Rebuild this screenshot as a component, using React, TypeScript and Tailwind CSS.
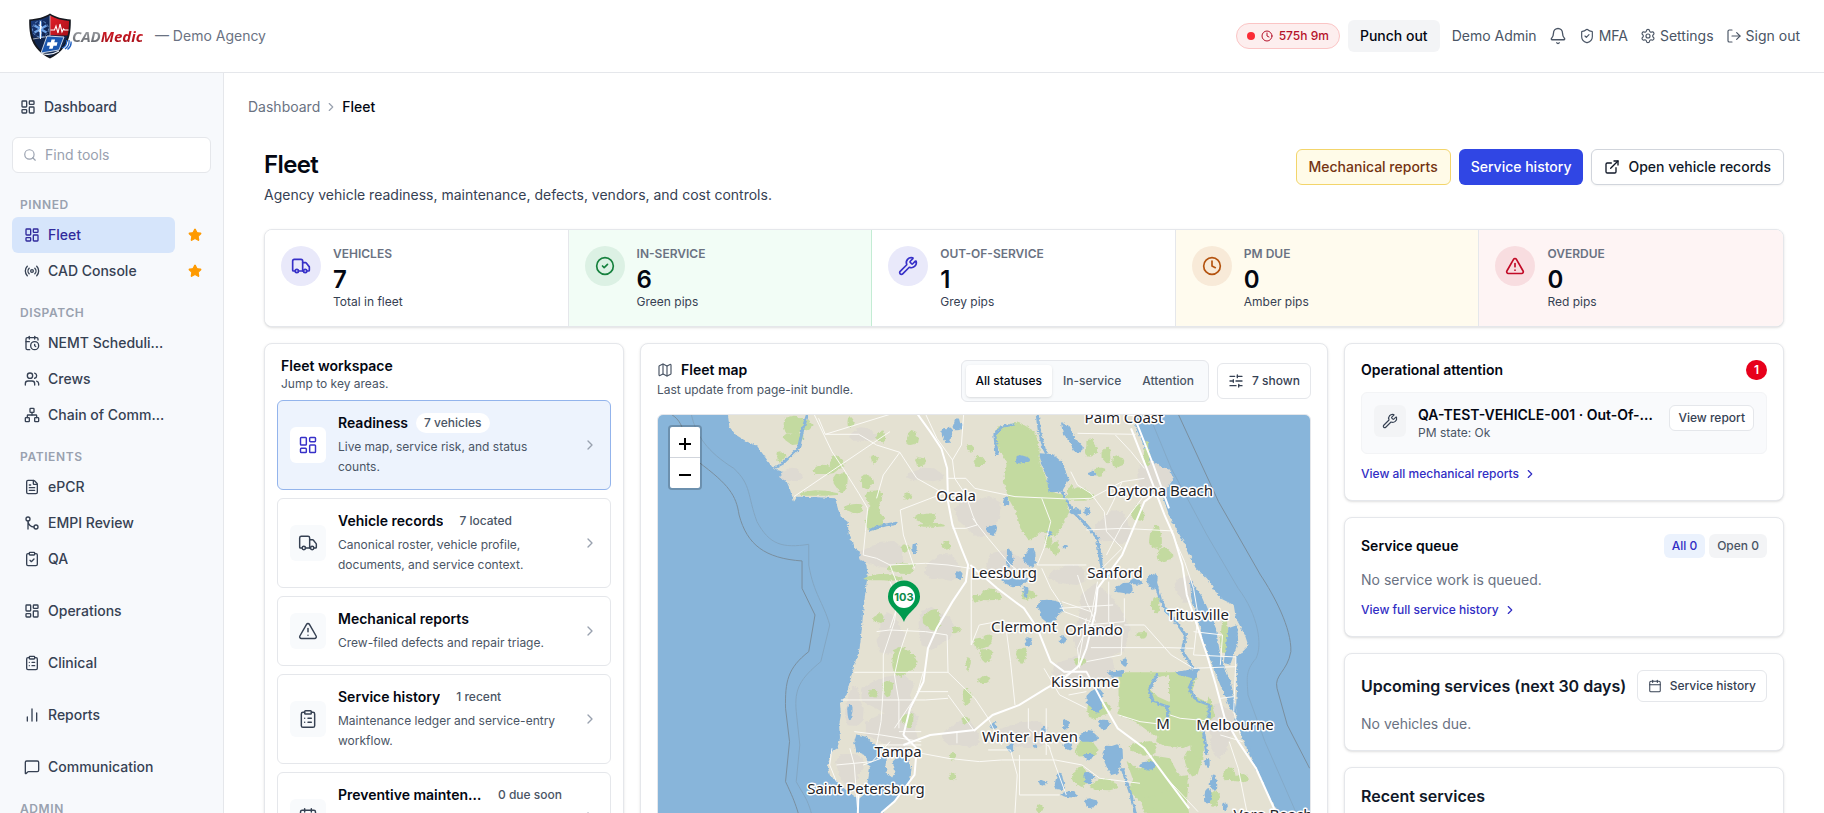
import type { ReactNode } from 'react';
import {
  Bell,
  Calendar,
  CalendarClock,
  ChartNoAxesColumn,
  ChevronRight,
  CircleCheck,
  ClipboardCheck,
  ClipboardList,
  Clock,
  ExternalLink,
  FileText,
  GitMerge,
  LayoutDashboard,
  LogOut,
  Map as MapIcon,
  MessageSquare,
  Network,
  Radio,
  Search,
  Settings,
  ShieldCheck,
  SlidersHorizontal,
  Star,
  TriangleAlert,
  Truck,
  Users,
  Wrench,
  type LucideIcon,
} from 'lucide-react';

interface NavItem {
  name: string;
  icon: LucideIcon;
  active?: boolean;
  pinned?: boolean;
}

interface NavSection {
  label?: string;
  items: NavItem[];
}

const navSections: NavSection[] = [
  {
    label: 'Pinned',
    items: [
      { name: 'Fleet', icon: LayoutDashboard, active: true, pinned: true },
      { name: 'CAD Console', icon: Radio, pinned: true },
    ],
  },
  {
    label: 'Dispatch',
    items: [
      { name: 'NEMT Scheduling', icon: CalendarClock },
      { name: 'Crews', icon: Users },
      { name: 'Chain of Command', icon: Network },
    ],
  },
  {
    label: 'Patients',
    items: [
      { name: 'ePCR', icon: FileText },
      { name: 'EMPI Review', icon: GitMerge },
      { name: 'QA', icon: ClipboardCheck },
    ],
  },
  { items: [{ name: 'Operations', icon: LayoutDashboard }] },
  { items: [{ name: 'Clinical', icon: ClipboardList }] },
  { items: [{ name: 'Reports', icon: ChartNoAxesColumn }] },
  { items: [{ name: 'Communication', icon: MessageSquare }] },
  { label: 'Admin', items: [] },
];

const stats = [
  { label: 'Vehicles', value: 7, note: 'Total in fleet', icon: Truck, cell: 'bg-white border-gray-200', badge: 'bg-[#e9e9fa] text-[#3730c8]' },
  { label: 'In-service', value: 6, note: 'Green pips', icon: CircleCheck, cell: 'bg-[#f2fdf6] border-[#c3ecd4]', badge: 'bg-[#dcf1e4] text-[#15803d]' },
  { label: 'Out-of-service', value: 1, note: 'Grey pips', icon: Wrench, cell: 'bg-white border-gray-200', badge: 'bg-[#e9e9fa] text-[#3730c8]' },
  { label: 'PM due', value: 0, note: 'Amber pips', icon: Clock, cell: 'bg-[#fffbee] border-gray-200', badge: 'bg-[#f8ead8] text-[#b4530f]' },
  { label: 'Overdue', value: 0, note: 'Red pips', icon: TriangleAlert, cell: 'bg-[#fef4f4]', badge: 'bg-[#f8dde0] text-[#c10a26]' },
];

const workspace = [
  { title: 'Readiness', count: '7 vehicles', text: 'Live map, service risk, and status counts.', icon: LayoutDashboard, active: true },
  { title: 'Vehicle records', count: '7 located', text: 'Canonical roster, vehicle profile, documents, and service context.', icon: Truck },
  { title: 'Mechanical reports', text: 'Crew-filed defects and repair triage.', icon: TriangleAlert },
  { title: 'Service history', count: '1 recent', text: 'Maintenance ledger and service-entry workflow.', icon: ClipboardList },
  { title: 'Preventive maintenance', count: '0 due soon', text: 'Interval tracking and overdue services for every vehicle.', icon: Calendar },
];

function Logo() {
  return (
    <a href="#" className="flex items-center" aria-label="CADMedic">
      <svg viewBox="0 0 44 46" className="h-[46px] w-11">
        <defs>
          <linearGradient id="shield-blue" x1="0" y1="0" x2="1" y2="1">
            <stop offset="0" stopColor="#1c3f86" />
            <stop offset="1" stopColor="#0c1c40" />
          </linearGradient>
          <linearGradient id="shield-red" x1="0" y1="0" x2="1" y2="1">
            <stop offset="0" stopColor="#e5202a" />
            <stop offset="1" stopColor="#a80f18" />
          </linearGradient>
        </defs>
        <path d="M22 .5C17 4 9 6 1.200 6.500 1 22 3 36 22 45.500 41 36 43 22 42.800 6.500 35 6 27 4 22 .5z" fill="#15181f" />
        <path d="M22 2.500C17 5.500 10 7.500 3 8c0 7 .5 12 2.500 17L22 23z" fill="url(#shield-blue)" />
        <path d="M22 2.500C27 5.500 34 7.500 41 8c0 6-.3 10-1.500 14.500L22 23z" fill="url(#shield-red)" />
        <path d="M5.500 25C8 33 13 39 22 43.500 31 39 37 32 39.500 23L22 22z" fill="#10264f" />
        <path d="M22 2.500V23L5 26" fill="none" stroke="#c9ced8" strokeWidth=".8" />
        <path d="M12.500 9v16M6.500 12.500l12 7M18.500 12.500l-12 7" stroke="#6fa4e8" strokeWidth="2.400" />
        <path d="M12.500 8v18M10.500 12c4 1 4 3 2 4s-2 3 1 4" fill="none" stroke="#fff" strokeWidth="1" />
        <circle cx="12.500" cy="16" r="8" fill="none" stroke="#86b3ea" strokeWidth=".7" strokeDasharray="3 1.500" />
        <path d="M22.500 17h4l1.500-4 2 7 2-9 2 8 1.500-3 1 1h4" fill="none" stroke="#fff" strokeWidth="1.100" />
        <path d="M19 23l17 1-5 13-18 3z" fill="#1b57b0" stroke="#dfe6f2" strokeWidth=".9" />
        <path d="M14 40.500c5 1.500 12 .5 17-2.500" fill="none" stroke="#eef2f8" strokeWidth="1.200" />
        <path d="M23.500 26.500h3.600l-.8 2.800h3.200l-.8 3.400h-3.200l-.9 3h-3.600l.9-3h-3.200l.9-3.400h3.200z" fill="#fff" />
        <path d="M34 35c3-1 5-4 4.500-8M37 36c3-2 4.500-5 4-9M39.500 36.500c2.500-2 4-5 3.500-8" fill="none" stroke="#1f5fc0" strokeWidth="1.300" />
      </svg>
      <span className="font-['Open_Sans',sans-serif] text-[15px] leading-5 font-bold italic">
        <span className="bg-gradient-to-b from-[#b4b6ba] to-[#55585e] bg-clip-text text-transparent">CAD</span>
        <span className="bg-gradient-to-b from-[#e3202c] to-[#9c0d16] bg-clip-text text-transparent">Medic</span>
      </span>
    </a>
  );
}

function Header() {
  return (
    <header className="flex h-[73px] shrink-0 items-center justify-between border-b border-gray-200 bg-white pr-6 pl-7">
      <div className="flex items-center gap-3">
        <Logo />
        <span className="text-sm text-gray-500">— Demo Agency</span>
      </div>
      <div className="flex items-center gap-3 text-sm text-gray-600">
        <div className="flex items-center gap-2">
          <span className="flex h-[26px] items-center gap-1.5 rounded-full border border-[#fbc5c5] bg-[#fdeeee] px-2.5 text-xs font-medium text-[#b5122a]">
            <span className="size-2 rounded-full bg-[#fb2c36]" />
            <Clock size={12} />
            575h 9m
          </span>
          <button className="h-8 rounded-md bg-gray-100 px-3 font-medium text-gray-950">Punch out</button>
        </div>
        <span>Demo Admin</span>
        <button aria-label="Notifications">
          <Bell size={18} strokeWidth={1.75} />
        </button>
        <a href="#" className="flex items-center gap-1">
          <ShieldCheck size={16} strokeWidth={1.75} />
          MFA
        </a>
        <a href="#" className="flex items-center gap-1">
          <Settings size={16} strokeWidth={1.75} />
          Settings
        </a>
        <button className="flex items-center gap-1">
          <LogOut size={16} strokeWidth={1.75} />
          Sign out
        </button>
      </div>
    </header>
  );
}

function Sidebar() {
  return (
    <aside className="w-56 shrink-0 overflow-hidden border-r border-gray-200 bg-[#f7f9fc] px-3 pt-4">
      <a href="#" className="flex h-9 items-center gap-2 px-2 text-sm font-medium text-gray-700">
        <LayoutDashboard size={16} />
        Dashboard
      </a>
      <label className="mt-3 flex h-9 items-center gap-2 rounded-md border border-gray-200 bg-white px-2.5 text-gray-400">
        <Search size={14} />
        <input
          type="text"
          aria-label="Find tools"
          placeholder="Find tools"
          className="min-w-0 flex-1 text-sm text-gray-700 outline-none placeholder:text-gray-400"
        />
      </label>
      <nav className="mt-6 space-y-4">
        {navSections.map((section, i) => (
          <div key={i}>
            {section.label && (
              <h2 className="mb-1 px-2 text-xs font-semibold tracking-wider text-gray-400 uppercase">{section.label}</h2>
            )}
            {section.items.map((item) => (
              <div key={item.name} className="flex items-center gap-1">
                <a
                  href="#"
                  className={`flex h-9 min-w-0 flex-1 items-center gap-2 rounded-md pr-2 pl-3 text-sm font-medium ${
                    item.active ? 'bg-[#d6e5fb] text-[#312a9c]' : 'text-gray-700'
                  }`}
                >
                  <item.icon size={16} className="shrink-0" />
                  <span className="truncate">{item.name}</span>
                </a>
                <button className="flex size-8 items-center justify-center" aria-label={`Pin ${item.name}`}>
                  {item.pinned && <Star size={14} className="fill-[#fe9a00] text-[#fe9a00]" />}
                </button>
              </div>
            ))}
          </div>
        ))}
      </nav>
    </aside>
  );
}

function Card({ className = '', children }: { className?: string; children: ReactNode }) {
  return <section className={`rounded-lg border border-gray-200 bg-white shadow-sm ${className}`}>{children}</section>;
}

function StatStrip() {
  return (
    <Card className="grid grid-cols-5 overflow-hidden">
      {stats.map((stat) => (
        <div key={stat.label} className={`flex gap-3 border-r p-4 last:border-r-0 ${stat.cell}`}>
          <span className={`flex size-10 shrink-0 items-center justify-center rounded-full ${stat.badge}`}>
            <stat.icon size={20} />
          </span>
          <div>
            <p className="text-xs font-semibold text-gray-500 uppercase">{stat.label}</p>
            <p className="mt-1 text-2xl leading-7 font-semibold text-gray-950">{stat.value}</p>
            <p className="text-xs text-gray-700">{stat.note}</p>
          </div>
        </div>
      ))}
    </Card>
  );
}

function Workspace() {
  return (
    <Card className="space-y-2 p-3">
      <div className="px-1">
        <h2 className="text-sm font-semibold text-gray-950">Fleet workspace</h2>
        <p className="text-xs text-gray-600">Jump to key areas.</p>
      </div>
      {workspace.map((item) => (
        <a
          key={item.title}
          href="#"
          className={`flex items-center gap-3 rounded-md border p-3 ${
            item.active ? 'border-[#93b4ec] bg-[#edf3fd]' : 'border-gray-200 bg-white'
          }`}
        >
          <span
            className={`flex size-9 shrink-0 items-center justify-center rounded-md ${
              item.active ? 'bg-white text-[#3730c8]' : 'bg-[#f8fafc] text-gray-700'
            }`}
          >
            <item.icon size={20} strokeWidth={1.75} />
          </span>
          <div className="min-w-0 flex-1">
            <div className="flex h-5 items-center gap-2">
              <h3 className="truncate text-sm font-semibold text-gray-950">{item.title}</h3>
              {item.count && (
                <span className="shrink-0 rounded-full bg-white px-2 text-xs leading-5 font-medium text-gray-600">{item.count}</span>
              )}
            </div>
            <p className="mt-1 text-xs leading-5 text-gray-600">{item.text}</p>
          </div>
          <ChevronRight size={16} className="shrink-0 text-gray-400" />
        </a>
      ))}
    </Card>
  );
}

// Land cover blobs: centre x, centre y, radius x, radius y
const parks: number[][] = [
  [350, 270, 32, 26], [345, 310, 22, 18], [472, 262, 8, 16], [540, 305, 10, 18], [610, 310, 14, 22], [525, 372, 8, 12],
  [628, 380, 12, 14], [440, 385, 16, 24], [412, 405, 24, 14], [315, 365, 10, 16], [508, 440, 14, 22], [450, 440, 16, 30],
  [400, 475, 42, 8], [525, 490, 18, 28], [480, 520, 22, 14], [525, 550, 20, 40], [600, 485, 9, 12], [640, 550, 24, 16],
  [655, 570, 28, 6], [760, 380, 12, 16], [740, 340, 8, 12], [686, 630, 9, 14], [588, 700, 30, 16], [595, 640, 10, 12],
  [1010, 340, 14, 26], [1045, 360, 10, 24], [1070, 380, 14, 18], [1030, 410, 12, 14], [985, 480, 30, 20], [1115, 535, 14, 24],
  [1155, 610, 14, 36], [1175, 660, 18, 20], [1135, 360, 6, 38], [930, 640, 10, 20], [965, 465, 8, 16], [915, 620, 8, 20],
  [545, 728, 42, 10], [655, 855, 20, 32], [535, 850, 12, 14], [590, 980, 28, 42], [555, 1060, 12, 24], [522, 1075, 10, 14],
  [600, 1155, 14, 22], [785, 780, 24, 18], [755, 790, 12, 12], [765, 925, 20, 16], [780, 910, 10, 12], [775, 960, 14, 20],
  [735, 985, 6, 20], [770, 1035, 14, 12], [732, 1085, 10, 26], [728, 1155, 8, 12], [855, 960, 12, 24], [700, 1265, 8, 12],
  [700, 1325, 8, 12], [708, 885, 10, 10], [870, 780, 18, 14], [1155, 810, 10, 24], [1125, 900, 12, 10], [985, 980, 14, 12],
  [1025, 1120, 26, 30], [1000, 1240, 24, 30], [985, 1325, 16, 30], [1040, 1350, 30, 18], [895, 1420, 8, 12], [1130, 1240, 30, 22],
  [1160, 1340, 60, 70], [1240, 1280, 20, 40], [1200, 1210, 40, 30], [1320, 1320, 14, 20], [1345, 1330, 20, 12], [1250, 1230, 16, 40],
  [1310, 900, 10, 60], [1180, 1400, 50, 30], [1285, 1390, 14, 24],
];

const urban: number[][] = [
  [545, 660, 50, 40], [760, 540, 50, 60], [560, 900, 30, 60], [1030, 880, 60, 120], [1000, 1000, 70, 50], [570, 1180, 60, 60],
  [470, 1300, 30, 50], [1060, 580, 40, 50], [1150, 430, 40, 50], [820, 690, 50, 40], [860, 1200, 60, 40], [1300, 1180, 30, 80],
  [720, 1200, 40, 40], [560, 1080, 60, 60], [480, 1120, 20, 60], [340, 420, 24, 20], [500, 300, 30, 20], [640, 420, 40, 20],
  [680, 700, 40, 40], [960, 720, 40, 30], [1220, 760, 20, 40], [660, 880, 40, 60],
];

const lakes: number[][] = [
  [688, 298, 12, 24], [711, 270, 10, 18], [788, 585, 12, 16], [820, 500, 7, 14], [856, 373, 16, 12], [1013, 416, 8, 8],
  [1002, 530, 7, 12], [975, 530, 12, 10], [828, 670, 8, 28], [874, 668, 14, 28], [918, 596, 6, 8], [952, 634, 6, 6],
  [840, 738, 30, 14], [864, 770, 6, 18], [918, 825, 28, 34], [870, 920, 8, 14], [948, 915, 8, 12], [1085, 760, 20, 16],
  [1110, 740, 14, 10], [1148, 738, 12, 24], [1085, 982, 7, 12], [1020, 1095, 18, 36], [1040, 1168, 12, 16], [1005, 1205, 20, 18],
  [954, 1168, 8, 16], [960, 1232, 10, 14], [904, 1184, 6, 10], [885, 1232, 5, 7], [792, 1172, 8, 10], [830, 1238, 9, 13],
  [1060, 1270, 22, 46], [1138, 1292, 18, 14], [940, 1342, 10, 26], [962, 1378, 18, 10], [1005, 1328, 12, 18], [1010, 1404, 14, 14],
  [902, 1344, 9, 8], [1005, 1265, 10, 10], [615, 640, 5, 16], [470, 1130, 6, 24], [1285, 1345, 8, 24], [1272, 1385, 9, 22],
  [1271, 1284, 6, 14], [1310, 1415, 6, 12], [715, 720, 8, 14],
];

const cities = [
  { name: 'Palm Coast', x: 466, y: 8 },
  { name: 'Ocala', x: 298, y: 86 },
  { name: 'Daytona Beach', x: 502, y: 81 },
  { name: 'Leesburg', x: 346, y: 163 },
  { name: 'Sanford', x: 457, y: 163 },
  { name: 'Clermont', x: 366, y: 217 },
  { name: 'Orlando', x: 436, y: 220 },
  { name: 'Titusville', x: 540, y: 205 },
  { name: 'Kissimme', x: 427, y: 272 },
  { name: 'M', x: 505, y: 314 },
  { name: 'Melbourne', x: 577, y: 315 },
  { name: 'Winter Haven', x: 372, y: 327 },
  { name: 'Tampa', x: 240, y: 342 },
  { name: 'Saint Petersburg', x: 208, y: 379 },
  { name: 'Vero Beach', x: 615, y: 405 },
];

function blobPath([cx, cy, rx, ry]: number[]) {
  const points = Array.from({ length: 11 }, (_, i) => {
    const angle = (i / 11) * Math.PI * 2;
    const r = 0.75 + 0.4 * Math.abs(Math.sin(cx * 3.1 + cy * 1.7 + i * 2.3));
    return `${Math.round(cx + Math.cos(angle) * rx * r)},${Math.round(cy + Math.sin(angle) * ry * r)}`;
  });
  return `M${points.join('L')}z`;
}

function FleetMap() {
  return (
    <svg viewBox="0 0 652 520" preserveAspectRatio="xMidYMin slice" className="h-full w-full bg-[#88b5da]" role="img" aria-label="Fleet map of central Florida">
      <defs>
        <filter id="rough" x="-5%" y="-5%" width="110%" height="110%">
          <feTurbulence type="fractalNoise" baseFrequency=".12" numOctaves="3" seed="4" />
          <feDisplacementMap in="SourceGraphic" scale="9" xChannelSelector="R" yChannelSelector="G" />
        </filter>
      </defs>
      <g transform="matrix(.4464 0 0 .3333 -18 -80)">
        {/* Maritime boundaries */}
        <g fill="none" stroke="#7a8f9f" strokeWidth="1" className="[&>path]:[vector-effect:non-scaling-stroke]">
          <path d="M70 238C110 270 90 330 130 380 200 450 215 480 222 540 240 630 280 670 363 678V760L392 840 378 950C330 1000 325 1040 326 1120L335 1220 326 1340C340 1380 355 1420 366 1500" />
          <path d="M115 238C125 300 150 350 210 400 250 450 240 480 262 560 290 630 320 640 378 628V690C390 780 410 800 425 870L405 980C360 1030 345 1060 350 1130L358 1230 350 1340C365 1380 385 1400 392 1500" opacity=".4" />
          <path d="M1206 238L1296 500 1390 720C1420 780 1460 880 1458 950 1450 1010 1420 1020 1427 1060L1450 1170 1500 1300" />
          <path d="M1140 238L1190 400 1270 600 1340 760C1385 840 1395 930 1380 970 1355 1010 1360 1030 1362 1080L1400 1220 1470 1434" opacity=".3" />
        </g>

        <g filter="url(#rough)">
          <path
            fill="#e4e1d2"
            d="M194 200L200 275 215 300 240 320 262 332 278 362 290 385 300 403 318 410 325 430 335 460 345 500 352 485 400 487 437 490 443 520 450 545 465 560 468 600 480 640 505 660 508 700 510 720 505 770 500 830 497 880 492 940 480 990 470 1040 462 1080 448 1105 450 1140 446 1170 448 1210 442 1240 430 1250 420 1290 425 1320 445 1345 465 1370 490 1392 505 1375 510 1340 515 1300 505 1262 485 1250 480 1220 485 1198 505 1205 520 1222 540 1240 556 1250 550 1290 553 1315 565 1328 572 1310 566 1280 585 1255 600 1275 608 1300 605 1340 590 1370 570 1400 550 1420 540 1450 600 1600 640 1850H1560L1500 1600 1430 1434 1395 1340 1370 1260 1345 1190 1335 1120 1338 1050 1335 965 1350 950 1363 932 1355 900 1335 850 1330 810 1300 790 1270 730 1245 700 1225 640 1205 590 1185 540 1175 500 1160 440 1140 380 1125 320 1110 275 1100 200z"
          />
          <g fill="#dedad2">
            {urban.map((area, i) => (
              <path key={i} d={blobPath(area)} />
            ))}
          </g>
          <g fill="#c3daa0">
            <path d="M800 275L850 262 885 290 895 340 895 380 910 430 920 470 950 480 962 530 945 575 930 605 900 590 872 618 852 580 842 530 825 490 815 440 822 380 805 350 795 310z" />
            <path d="M1072 1012H1187L1240 1010 1280 1100 1290 1140 1260 1180 1240 1230 1150 1200 1110 1160 1072 1140z" />
            <path d="M1090 1280L1130 1310 1180 1330 1230 1320 1225 1400 1240 1500 1180 1500 1130 1430z" />
            {parks.map((park, i) => (
              <path key={i} d={blobPath(park)} />
            ))}
          </g>
          <path fill="#e4e1d2" d="M1150 1030L1185 1020V1100L1160 1085 1142 1060zM1245 1030L1280 1050 1270 1100 1235 1080z" />
          <g fill="#88b5da">
            {lakes.map((lake, i) => (
              <path key={i} d={blobPath(lake)} />
            ))}
            <path d="M895 355L925 358 948 385 960 435 945 470 915 472 912 430 898 385z" />
            <path d="M943 262L962 275 975 310 992 335 990 352 975 352 962 320 948 300z" />
            <path d="M1232 735L1262 790 1290 880 1300 960 1325 1050 1338 1140 1322 1120 1300 1050 1285 1000 1262 920 1250 850 1235 790z" />
            <path d="M1318 880L1338 870 1340 920 1322 990 1308 980z" />
            <path d="M1200 1010L1255 1000 1240 1030 1205 1020zM1045 1010L1085 1005 1080 1025 1055 1025z" />
          </g>
          <g fill="none" stroke="#88b5da" strokeWidth="7">
            <path d="M375 240L365 280 355 340 320 385 300 400" />
            <path d="M890 240L895 290 905 340 920 380M800 360L795 300 810 275 840 268" />
            <path d="M945 470L970 530 1000 570 1025 610 1030 660 1035 700 1060 730M1150 720L1165 790 1180 830 1200 860 1222 900 1215 950 1240 1000" />
            <path d="M1160 1015L1140 1065 1150 1100 1182 1115V1150M1245 1015L1230 1060 1245 1095 1275 1110V1150" />
            <path d="M1080 1300L1100 1380 1120 1500M1260 1170L1270 1260" />
            <path d="M1335 1150L1370 1260 1420 1400" strokeWidth="9" />
            <path d="M515 585L550 570 575 565" strokeWidth="9" />
          </g>
        </g>

        {/* Roads */}
        <g fill="none" stroke="#fbfaf6" strokeWidth="1" className="[&>path]:[vector-effect:non-scaling-stroke]">
          <path d="M390 238L430 350 455 400 490 475 510 520 505 590 500 660 530 670 560 690 580 760 570 860 545 960 545 1060 540 1160 530 1230" />
          <path d="M560 238L415 298H490L530 330 582 352 545 420 530 490M582 352L620 430 680 475 583 525 590 600 615 700M400 250L415 298M345 485L455 385 560 290" />
          <path d="M640 238L665 310 700 375 720 330 725 238M700 375L705 430 730 480" />
          <path d="M688 430H730L750 460 840 485 960 492 1010 490 1080 440 1130 430" />
          <path d="M730 480L745 540 755 570 730 580H700M745 550L780 610 830 690 860 720" />
          <path d="M900 490L920 560 905 640 890 690H1000M900 700L920 760 940 800 950 830 1010 860" />
          <path d="M965 410L980 450 1010 475 1040 530 1045 590 1080 640 1020 720M1080 440L1060 500 1045 540M1130 480L1080 570 1045 660M1000 585L1080 580 1195 588" />
          <path d="M980 295L1110 298M1065 300L1100 350 1130 400" />
          <path d="M560 690L640 685 690 690 740 700M742 730V930M742 930L760 870 800 860 900 870" />
          <path d="M480 1012L690 1012 750 1090 780 1150 810 1230M690 1012L688 900 640 890 560 885 530 890M450 1095H640L690 1090M620 1070H690" />
          <path d="M560 880L580 800 560 740M600 880L580 960 570 1020 580 1100 580 1180M570 1180L620 1080 635 1010" />
          <path d="M530 1230H630M580 1190H630M630 1255L690 1270 760 1280 810 1275 900 1275 930 1275 990 1290 1030 1330 1120 1345" />
          <path d="M710 1190V1225M780 1245H830L845 1320 840 1434M915 1230L930 1290 955 1380M850 1260V1380H940M750 1190L690 1080" />
          <path d="M905 1000L940 1080 1000 1120M870 1120L870 1180 920 1240M840 1110L830 980 820 880M910 1120V1260M960 1080L1000 1070" />
          <path d="M980 720L1000 800 1020 860M1025 740L1010 850 980 940 985 1000M1050 740V860L1080 900 1078 960 1000 980M940 820L1000 815 1060 810M1085 790L1085 860 1000 870M945 800L1010 830" />
          <path d="M1085 870L1130 870 1190 960 1240 1000 1335 995M1010 938H1180L1240 940M1240 960L1335 966M1000 850L980 1000 940 1030" />
          <path d="M1190 590L1220 680 1240 760 1250 840 1240 960M1335 966L1330 1130 1345 1200M1240 890L1305 900 1300 990M1300 1090L1330 1085M1300 1200L1350 1220" />
          <path d="M1072 1140L1120 1160 1180 1170M1187 1140L1210 1150 1290 1160M1320 1220L1340 1300 1360 1434M1180 1330L1250 1430" />
          <path d="M430 1240L425 1290 440 1340M480 1190L540 1200 630 1220M440 1290L520 1280 560 1220M470 1240L480 1290 488 1434M500 1290L540 1270" />
        </g>
        <g fill="none" stroke="#fff" strokeWidth="2" className="[&>path]:[vector-effect:non-scaling-stroke]">
          <path d="M622 238L650 290 675 340 688 400 690 500 700 570 720 640 735 690 730 740 700 800 665 880 645 940 635 1040 605 1120 590 1200" />
          <path d="M590 1230L650 1200 750 1185 790 1140 850 1110 910 1060 950 1030 985 990 1000 940 1020 830 1025 760 1080 660 1130 500 1170 460" />
          <path d="M1100 280L1135 400 1155 470 1175 540 1195 600 1215 690 1225 780 1245 860 1270 960 1290 1050 1310 1150 1340 1220 1380 1300 1425 1434" />
          <path d="M740 690L800 760 860 820 890 880 920 980 950 1010 1000 1010 1040 1110 1070 1180 1130 1240 1180 1330 1230 1420" />
          <path d="M1105 238L1150 390 1185 520M590 1200L620 1240 615 1320 570 1400 540 1434M490 1350L488 1434" />
        </g>
      </g>

      {/* City labels */}
      <g
        textAnchor="middle"
        fill="#1f2428"
        stroke="#fff"
        strokeWidth="3"
        strokeLinejoin="round"
        paintOrder="stroke"
        className="font-['Noto_Sans',sans-serif] text-[15px]"
      >
        {cities.map((city) => (
          <text key={city.name} x={city.x} y={city.y}>
            {city.name}
          </text>
        ))}
      </g>

      {/* Vehicle pin */}
      <path d="M246 207C242 196 230 193 230 181.500a16 16 0 0 1 32 0C262 193 250 196 246 207z" fill="#009a4e" />
      <circle cx="246" cy="182" r="11" fill="#fff" />
      <text x="246" y="186" textAnchor="middle" fill="#0b8a4a" className="text-[11px] font-bold">
        103
      </text>
    </svg>
  );
}

function MapCard() {
  return (
    <Card className="min-w-0 p-4">
      <div className="flex items-start justify-between gap-4">
        <div>
          <h2 className="flex items-center gap-2 text-sm font-semibold text-gray-950">
            <MapIcon size={16} strokeWidth={1.75} className="text-gray-600" />
            Fleet map
          </h2>
          <p className="mt-0.5 text-xs text-gray-600">Last update from page-init bundle.</p>
        </div>
        <div className="flex items-center gap-2">
          <div className="flex gap-px rounded-md border border-gray-200 bg-[#f8fafc] p-1 text-xs font-medium text-gray-600">
            <button className="h-8 rounded bg-white px-2.5 text-gray-950 shadow-sm">All statuses</button>
            <button className="h-8 rounded px-2.5">In-service</button>
            <button className="h-8 rounded px-2.5">Attention</button>
          </div>
          <button className="flex h-9 items-center gap-2 rounded-md border border-gray-200 px-2.5 text-xs font-medium text-gray-700">
            <SlidersHorizontal size={16} />
            7 shown
          </button>
        </div>
      </div>
      <div className="relative mt-3 h-[520px] overflow-hidden rounded-md border border-gray-200">
        <FleetMap />
        <div className="absolute top-2.5 left-2.5 overflow-hidden rounded border-2 border-black/20 bg-white bg-clip-padding text-black">
          <button className="flex h-[31px] w-[30px] items-center justify-center border-b border-gray-300 pt-1" aria-label="Zoom in">
            <svg viewBox="0 0 12 12" className="size-3" stroke="currentColor" strokeWidth="2">
              <path d="M0 6h12M6 0v12" />
            </svg>
          </button>
          <button className="flex size-[30px] items-center justify-center pt-1" aria-label="Zoom out">
            <svg viewBox="0 0 12 12" className="size-3" stroke="currentColor" strokeWidth="2">
              <path d="M0 6h12" />
            </svg>
          </button>
        </div>
      </div>
    </Card>
  );
}

function MoreLink({ children }: { children: ReactNode }) {
  return (
    <a href="#" className="mt-2.5 flex h-5 items-center gap-1 text-xs font-medium text-[#312dc4]">
      {children}
      <ChevronRight size={14} />
    </a>
  );
}

function RightColumn() {
  return (
    <div className="space-y-4">
      <Card className="p-4">
        <div className="flex items-center justify-between">
          <h2 className="text-sm font-semibold text-gray-950">Operational attention</h2>
          <span className="rounded-full bg-[#e7001b] px-2 text-xs leading-5 font-semibold text-white">1</span>
        </div>
        <div className="mt-3 flex items-start gap-3 rounded-md border border-gray-100 bg-[#f9fafc] p-3">
          <span className="flex size-8 shrink-0 items-center justify-center rounded-md bg-gray-100 text-gray-700">
            <Wrench size={16} strokeWidth={1.75} />
          </span>
          <div className="min-w-0 flex-1">
            <h3 className="truncate text-sm font-semibold text-gray-950">QA-TEST-VEHICLE-001 · Out-Of-Service</h3>
            <p className="text-xs text-gray-600">PM state: Ok</p>
          </div>
          <button className="ml-1 h-[26px] shrink-0 rounded-md border border-gray-200 bg-white px-2 text-xs font-medium text-gray-700">
            View report
          </button>
        </div>
        <MoreLink>View all mechanical reports</MoreLink>
      </Card>

      <Card className="p-4">
        <div className="flex items-center justify-between">
          <h2 className="text-sm font-semibold text-gray-950">Service queue</h2>
          <div className="flex gap-1 text-xs font-medium">
            <button className="h-6 rounded-md bg-[#ebf2fd] px-2 text-[#312dc4]">All 0</button>
            <button className="h-6 rounded-md bg-gray-100 px-2 text-gray-600">Open 0</button>
          </div>
        </div>
        <p className="mt-3 text-sm text-gray-500">No service work is queued.</p>
        <MoreLink>View full service history</MoreLink>
      </Card>

      <Card className="p-4">
        <div className="flex items-center justify-between">
          <h2 className="text-base font-semibold text-gray-900">Upcoming services (next 30 days)</h2>
          <button className="flex h-8 items-center gap-2 rounded-md border border-gray-200 px-2.5 text-xs font-medium text-gray-700">
            <Calendar size={14} strokeWidth={1.75} />
            Service history
          </button>
        </div>
        <p className="mt-3 text-sm text-gray-500">No vehicles due.</p>
      </Card>

      <Card className="p-4">
        <h2 className="text-base font-semibold text-gray-900">Recent services</h2>
      </Card>
    </div>
  );
}

export default function App() {
  return (
    <div className="flex h-screen flex-col overflow-hidden bg-white font-['Inter',sans-serif]">
      <Header />
      <div className="flex min-h-0 flex-1">
        <Sidebar />
        <main className="min-w-0 flex-1 overflow-y-auto p-6 [scrollbar-width:none]">
          <nav aria-label="Breadcrumb" className="flex items-center gap-1 text-sm">
            <a href="#" className="text-gray-500">
              Dashboard
            </a>
            <ChevronRight size={14} className="text-gray-400" />
            <span className="font-medium text-gray-950">Fleet</span>
          </nav>

          <div className="mt-4 p-4">
            <div className="flex items-start justify-between">
              <div>
                <h1 className="text-2xl font-semibold tracking-tight text-gray-950">Fleet</h1>
                <p className="mt-1 text-sm text-gray-700">Agency vehicle readiness, maintenance, defects, vendors, and cost controls.</p>
              </div>
              <div className="flex gap-2 text-sm font-medium">
                <button className="h-9 rounded-md border border-[#f3d56b] bg-[#fffbe8] px-3 text-[#743412]">Mechanical reports</button>
                <button className="h-9 rounded-md bg-[#3046e4] px-3 text-white">Service history</button>
                <button className="flex h-9 items-center gap-2 rounded-md border border-gray-300 bg-white px-3 text-gray-900 shadow-xs">
                  <ExternalLink size={16} />
                  Open vehicle records
                </button>
              </div>
            </div>

            <div className="mt-6">
              <StatStrip />
            </div>

            <div className="mt-4 grid grid-cols-[360px_minmax(0,1fr)_440px] items-start gap-4">
              <Workspace />
              <MapCard />
              <RightColumn />
            </div>
          </div>
        </main>
      </div>
    </div>
  );
}
